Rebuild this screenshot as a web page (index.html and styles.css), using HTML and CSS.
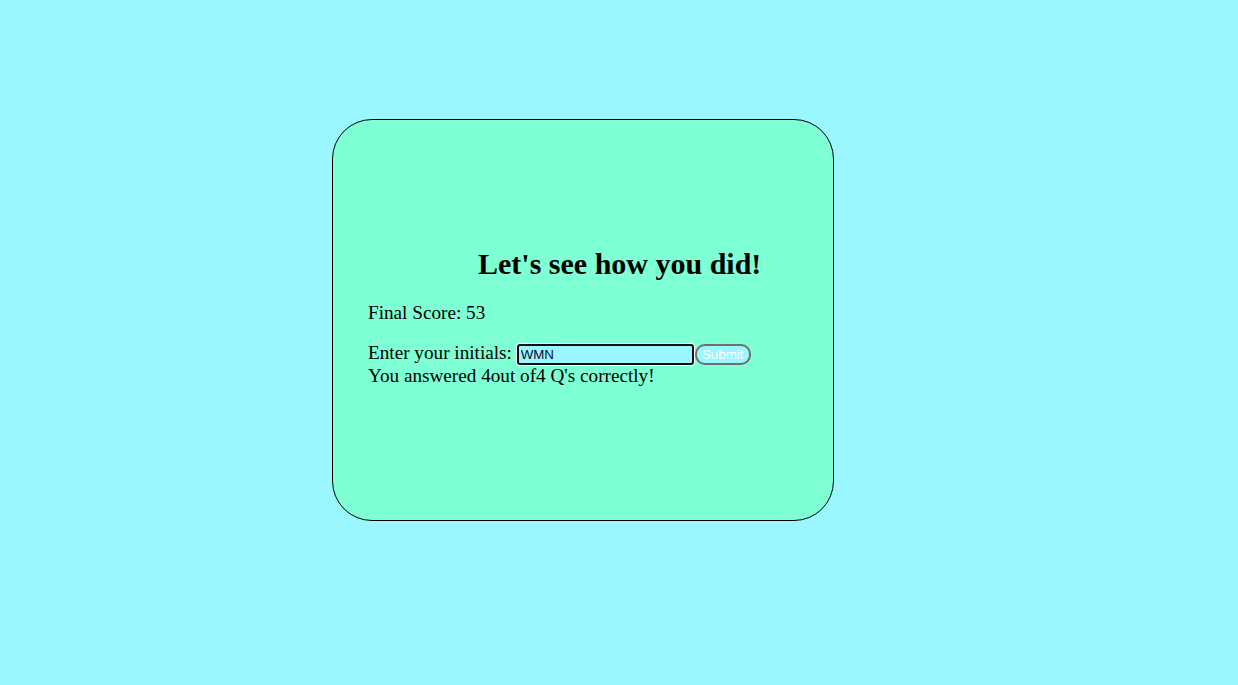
FILE: index.html
```html
<!DOCTYPE html>
<html lang="en">
<head>
<meta charset="utf-8">
<title>Quiz Results</title>
<link rel="stylesheet" href="styles.css">
</head>
<body>
<main class="page">
  <section class="card">
    <h2 class="title">Let's see how you did!</h2>
    <p class="score">Final Score: 53</p>
    <div class="entry">Enter your initials: <input class="initials" type="text" value="WMN"><button class="submit" type="button">Submit</button></div>
    <div class="summary">You answered 4out of4 Q's correctly!</div>
  </section>
</main>
</body>
</html>
```
FILE: styles.css
```css
html, body {
  margin: 0;
  padding: 0;
  background: #9af6ff;
  height: 100%;
}
body {
  font-family: "Liberation Serif", "Times New Roman", serif;
  color: #000;
}
.page {
  padding: 119px 0 0 332px;
}
.card {
  box-sizing: border-box;
  width: 502px;
  height: 402px;
  background: #7fffd4;
  border: 1px solid #000;
  border-radius: 40px;
  padding: 127px 0 0 35px;
  font-size: 19.2px;
}
.title {
  margin: 0 0 21px 0;
  padding-left: 110px;
  font-size: 30px;
  font-weight: bold;
}
.score {
  margin: 0 0 17px 0;
}
.entry {
  line-height: 23px;
}
.initials {
  box-sizing: border-box;
  width: 177px;
  height: 21px;
  margin: 0;
  padding: 1px 2px;
  border: 2px solid #101010;
  border-radius: 3px;
  box-shadow: 0 0 0 1px #fff;
  background: #9af6ff;
  font-family: "Liberation Sans", Arial, sans-serif;
  font-size: 13.33px;
  color: #0a0a30;
  outline: none;
}
.submit {
  box-sizing: border-box;
  width: 56px;
  height: 21px;
  margin: 0 0 0 1px;
  padding: 0;
  border: 2px solid #6f6f6f;
  border-radius: 10px;
  background: #9af6ff;
  color: #fff;
  font-family: "Liberation Sans", Arial, sans-serif;
  font-size: 13.33px;
}
.summary {
  line-height: 22px;
}
```
